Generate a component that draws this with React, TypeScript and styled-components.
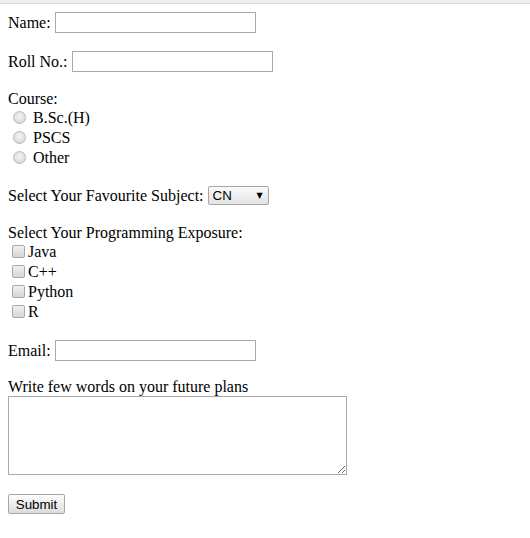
import React from "react";
import styled, { createGlobalStyle } from "styled-components";

const Global = createGlobalStyle`
  html, body { margin: 0; padding: 0; background: #fff; }
  body { font-family: "Liberation Serif", "Times New Roman", serif; font-size: 16px; color: #000; }
`;

const Strip = styled.div`
  height: 3px;
  background: #ededed;
  border-bottom: 1px solid #d8d8d8;
`;

const Form = styled.form`
  display: flex;
  flex-direction: column;
  padding: 0 8px;
`;

const Row = styled.div<{ $top: number; $h: number }>`
  display: flex;
  align-items: center;
  margin-top: ${(p) => p.$top}px;
  height: ${(p) => p.$h}px;
  white-space: pre;
  line-height: 18px;
`;

const Label = styled.span`
  line-height: 18px;
`;

const TextInput = styled.input`
  box-sizing: border-box;
  width: 201px;
  height: 21px;
  margin: 0 0 0 4px;
  padding: 1px 2px;
  border: 1px solid #a9a9a9;
  border-radius: 0;
  outline: none;
  background: #fff;
  font: 13.33px "Liberation Sans", Arial, sans-serif;
`;

const Radio = styled.input`
  appearance: none;
  box-sizing: border-box;
  width: 13px;
  height: 13px;
  margin: 0 7px 2px 5px;
  border-radius: 50%;
  border: 1px solid #b9b9b9;
  background: radial-gradient(circle at 50% 40%, #f4f4f4 0%, #e2e2e2 55%, #cfcfcf 100%);
`;

const Check = styled.input`
  appearance: none;
  box-sizing: border-box;
  width: 13px;
  height: 13px;
  margin: 0 3px 1px 4px;
  border-radius: 2px;
  border: 1px solid #a8a8a8;
  background: linear-gradient(#f0f0f0, #d6d6d6);
`;

const SelectWrap = styled.span`
  position: relative;
  display: inline-flex;
  margin-left: 4px;
  &::after {
    content: "▼";
    position: absolute;
    right: 6px;
    top: 5px;
    font: 8px "DejaVu Sans", sans-serif;
    color: #000;
    pointer-events: none;
  }
`;

const Select = styled.select`
  appearance: none;
  box-sizing: border-box;
  width: 61px;
  height: 19px;
  margin: 0;
  padding: 0 0 0 4px;
  border: 1px solid #a6a6a6;
  border-radius: 2px;
  background: linear-gradient(#fbfbfb, #e3e3e3);
  font: 13.33px "Liberation Sans", Arial, sans-serif;
  color: #000;
  outline: none;
`;

const Area = styled.textarea`
  box-sizing: border-box;
  width: 339px;
  height: 79px;
  margin: 0;
  padding: 2px;
  border: 1px solid #a9a9a9;
  border-radius: 0;
  outline: none;
  resize: both;
  font: 13.33px "Liberation Mono", monospace;
  display: block;
`;

const SubmitButton = styled.button`
  box-sizing: border-box;
  width: 57px;
  height: 20px;
  margin: 0;
  padding: 0 6px;
  border: 1px solid #a6a6a6;
  border-radius: 2px;
  background: linear-gradient(#fdfdfd, #dcdcdc);
  font: 13.33px "Liberation Sans", Arial, sans-serif;
  color: #000;
`;

const Block = styled.div<{ $top: number }>`
  margin-top: ${(p) => p.$top}px;
  display: flex;
`;

export default function App() {
  return (
    <>
      <Global />
      <Strip />
      <Form onSubmit={(e) => e.preventDefault()}>
        <Row $top={8} $h={21}>
          <Label>Name:</Label>
          <TextInput type="text" />
        </Row>
        <Row $top={18} $h={21}>
          <Label>Roll No.:</Label>
          <TextInput type="text" />
        </Row>
        <Row $top={18} $h={18}>
          <Label>Course:</Label>
        </Row>
        {["B.Sc.(H)", "PSCS", "Other"].map((c) => (
          <Row key={c} $top={0} $h={20}>
            <Radio type="radio" name="course" />
            <Label>{c}</Label>
          </Row>
        ))}
        <Row $top={18} $h={19}>
          <Label>Select Your Favourite Subject:</Label>
          <SelectWrap>
            <Select defaultValue="CN">
              <option>CN</option>
              <option>DBMS</option>
              <option>OS</option>
            </Select>
          </SelectWrap>
        </Row>
        <Row $top={19} $h={18}>
          <Label>Select Your Programming Exposure:</Label>
        </Row>
        {["Java", "C++", "Python", "R"].map((c) => (
          <Row key={c} $top={0} $h={20}>
            <Check type="checkbox" />
            <Label>{c}</Label>
          </Row>
        ))}
        <Row $top={18} $h={21}>
          <Label>Email:</Label>
          <TextInput type="email" />
        </Row>
        <Row $top={17} $h={18}>
          <Label>Write few words on your future plans</Label>
        </Row>
        <Block $top={0}>
          <Area />
        </Block>
        <Block $top={19}>
          <SubmitButton type="submit">Submit</SubmitButton>
        </Block>
      </Form>
    </>
  );
}
